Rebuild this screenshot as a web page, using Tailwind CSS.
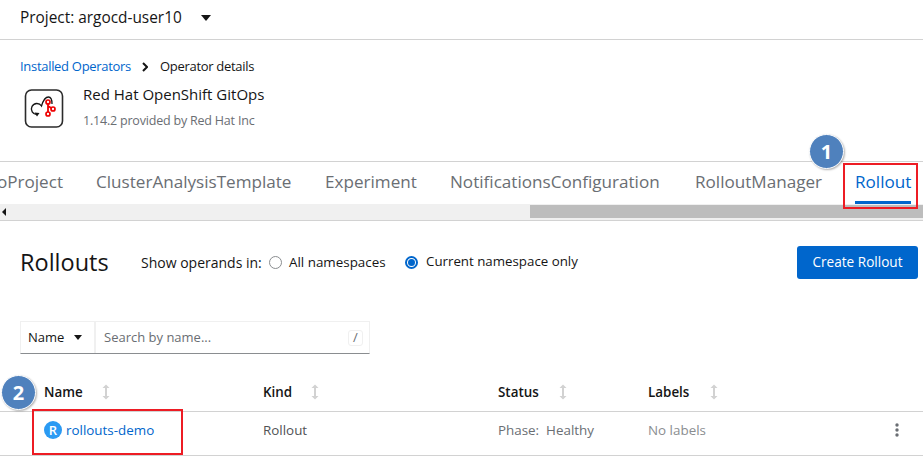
<!DOCTYPE html>
<html>
<head>
<meta charset="utf-8">
<script src="https://cdn.jsdelivr.net/npm/@tailwindcss/browser@4"></script>
</head>
<body class="bg-white">
<div class="relative w-[923px] h-[468px] overflow-hidden bg-white text-[#151515] font-['Open_Sans','Noto_Sans',sans-serif]">

  <!-- project bar -->
  <div class="h-10 border-b border-[#d2d2d2] pl-5 pb-[4px] flex items-center">
    <span class="text-[15.4px] w-[181px]">Project: argocd-user10</span>
    <span class="w-0 h-0 border-x-[5.5px] border-x-transparent border-t-[6px] border-t-[#151515]"></span>
  </div>

  <!-- breadcrumb -->
  <div class="h-[37px] pl-5 pt-[16px] flex items-center text-[13px] tracking-[-0.3px] leading-none">
    <a class="text-[#0066cc] w-[122px]">Installed Operators</a>
    <svg class="w-[6px] h-[10px] mr-[12px]" viewBox="0 0 6 10"><path d="M1 1l4 4-4 4" fill="none" stroke="#151515" stroke-width="2"/></svg>
    <span>Operator details</span>
  </div>

  <!-- operator heading -->
  <div class="h-[84px] pl-6 pt-[11px] flex gap-[19px]">
    <svg class="w-10 h-10 shrink-0" viewBox="0 0 40 40">
      <rect x="1.500" y="2" width="37" height="37" rx="6" fill="#fff" stroke="#2b2b2b" stroke-width="1.600"/>
      <path d="M13 26.500a5.500 5.500 0 1 1 4.500-8.500C19 13 21 9 24.500 9 27 9 28 11 28 16" fill="none" stroke="#151515" stroke-width="1.300"/>
      <path d="M10.500 24.500l2.500 4 2.500-3.500z" fill="#151515"/>
      <path d="M24 15v10M24 18l5 3" fill="none" stroke="#e00" stroke-width="1.800"/>
      <circle cx="24" cy="14" r="2" fill="#fff" stroke="#e00" stroke-width="1.700"/>
      <circle cx="29" cy="21" r="2" fill="#fff" stroke="#e00" stroke-width="1.700"/>
      <circle cx="24" cy="26" r="2" fill="#fff" stroke="#e00" stroke-width="1.700"/>
    </svg>
    <div>
      <div class="text-[15px] font-medium leading-5 mt-[-4px]">Red Hat OpenShift GitOps</div>
      <div class="text-[12.5px] tracking-[-0.2px] leading-5 mt-[7px] text-[#6a6e73]">1.14.2 provided by Red Hat Inc</div>
    </div>
  </div>

  <!-- tabs -->
  <div class="border-t border-[#d2d2d2] h-[43px] flex items-start overflow-hidden text-[17.1px] leading-[40px] text-[#6a6e73] whitespace-nowrap">
    <span class="w-[96px] shrink-0 flex justify-end pr-[33px]">oProject</span>
    <span class="w-[229px] shrink-0">ClusterAnalysisTemplate</span>
    <span class="w-[125px] shrink-0">Experiment</span>
    <span class="w-[245px] shrink-0">NotificationsConfiguration</span>
    <span class="w-[160px] shrink-0">RolloutManager</span>
    <span class="w-[56px] shrink-0 h-[42px] text-[#0066cc] border-b-[3px] border-[#0066cc]">Rollout</span>
  </div>

  <!-- horizontal scrollbar -->
  <div class="h-[17px] bg-[#f0f0f0] border-b border-[#d2d2d2] flex items-center">
    <span class="ml-[2px] w-0 h-0 border-y-[4px] border-y-transparent border-r-[4px] border-r-[#151515]"></span>
    <div class="ml-auto w-[393px] h-[13px] mb-[1px] bg-[#bdbdbd]"></div>
  </div>

  <!-- page title row -->
  <div class="h-[82px] pl-5 pr-[5px] flex items-center">
    <h1 class="text-[23.5px] w-[121px] pt-[2px]">Rollouts</h1>
    <span class="text-[14px] w-[128px]">Show operands in:</span>
    <span class="w-[13px] h-[13px] rounded-full border border-[#8a8d90]"></span>
    <span class="text-[13.4px] ml-[7px] w-[116px]">All namespaces</span>
    <span class="w-[13px] h-[13px] rounded-full border-[2px] border-[#0066cc] flex items-center justify-center"><span class="w-[7px] h-[7px] rounded-full bg-[#0066cc]"></span></span>
    <span class="text-[13.3px] ml-[8px]">Current namespace only</span>
    <button class="ml-auto h-[33px] w-[121px] bg-[#0066cc] text-white text-[13.6px] rounded-[3px]">Create Rollout</button>
  </div>

  <!-- filter -->
  <div class="ml-5 mt-[18px] w-[350px] h-[33px] flex border border-[#f0f0f0] border-b-[#8a8d90] text-[13px]">
    <div class="w-[75px] border-r-[2px] border-[#f0f0f0] pl-[7px] flex items-center gap-[10px]">
      <span>Name</span>
      <span class="w-0 h-0 border-x-[4px] border-x-transparent border-t-[5px] border-t-[#151515]"></span>
    </div>
    <div class="flex-1 pl-[8px] pr-[6px] flex items-center justify-between text-[#6a6e73]">
      <span>Search by name...</span>
      <span class="w-[15px] h-[16px] border border-[#f0f0f0] rounded-[3px] flex items-center justify-center text-[13px] leading-none">/</span>
    </div>
  </div>

  <!-- table -->
  <table class="mt-[16px] w-full text-[13.4px] border-collapse">
    <thead>
      <tr class="h-[41px] border-b border-[#d2d2d2] text-left">
        <th class="w-[263px] pl-[44px] pt-[3px] font-semibold"><span class="inline-block w-[58px]">Name</span><svg class="inline w-[8px] h-[16px] align-[-3px]" viewBox="0 0 8 16"><path d="M4 2v12" stroke="#d2d2d2" stroke-width="2"/><path d="M0.500 4L4 0.500 7.500 4zM0.500 12L4 15.500 7.500 12z" fill="#d2d2d2"/></svg></th>
        <th class="w-[235px] pt-[3px] font-semibold"><span class="inline-block w-[48px]">Kind</span><svg class="inline w-[8px] h-[16px] align-[-3px]" viewBox="0 0 8 16"><path d="M4 2v12" stroke="#d2d2d2" stroke-width="2"/><path d="M0.500 4L4 0.500 7.500 4zM0.500 12L4 15.500 7.500 12z" fill="#d2d2d2"/></svg></th>
        <th class="w-[150px] pt-[3px] font-semibold"><span class="inline-block w-[61px]">Status</span><svg class="inline w-[8px] h-[16px] align-[-3px]" viewBox="0 0 8 16"><path d="M4 2v12" stroke="#d2d2d2" stroke-width="2"/><path d="M0.500 4L4 0.500 7.500 4zM0.500 12L4 15.500 7.500 12z" fill="#d2d2d2"/></svg></th>
        <th class="pt-[3px] font-semibold"><span class="inline-block w-[62px]">Labels</span><svg class="inline w-[8px] h-[16px] align-[-3px]" viewBox="0 0 8 16"><path d="M4 2v12" stroke="#d2d2d2" stroke-width="2"/><path d="M0.500 4L4 0.500 7.500 4zM0.500 12L4 15.500 7.500 12z" fill="#d2d2d2"/></svg></th>
        <th class="w-[40px]"></th>
      </tr>
    </thead>
    <tbody>
      <tr class="h-[44px] border-b border-[#d2d2d2]">
        <td class="pl-[44px] pb-[6px]">
          <span class="inline-flex items-center gap-[4px] text-[#0066cc]">
            <span class="w-[18px] h-[18px] rounded-full bg-[#2b9af3] text-white text-[13px] font-semibold flex items-center justify-center">R</span>
            rollouts-demo
          </span>
        </td>
        <td class="pb-[6px] text-[#4f5255]">Rollout</td>
        <td class="pb-[6px] text-[#6a6e73]">Phase:&nbsp; Healthy</td>
        <td class="pb-[6px] text-[#8a8d90]">No labels</td>
        <td class="pb-[6px]">
          <svg class="w-[4px] h-[14px] ml-[12px]" viewBox="0 0 4 14"><circle cx="2" cy="2" r="1.700" fill="#6a6e73"/><circle cx="2" cy="7" r="1.700" fill="#6a6e73"/><circle cx="2" cy="12" r="1.700" fill="#6a6e73"/></svg>
        </td>
      </tr>
    </tbody>
  </table>

  <!-- annotations over the screenshot -->
  <div class="absolute left-[843px] top-[163px] w-[75px] h-[46px] border-[2px] border-[#ed1c24]"></div>
  <div class="absolute left-[32px] top-[409px] w-[151px] h-[46px] border-[2px] border-[#ed1c24]"></div>
  <div class="absolute left-[809px] top-[134px] w-[35px] h-[35px] rounded-full bg-[#4f81bd] border border-white shadow-[1px_1px_2px_rgba(0,0,0,0.3)] flex items-center justify-center text-white font-bold text-[20px]">1</div>
  <div class="absolute left-[1px] top-[375px] w-[35px] h-[35px] rounded-full bg-[#4f81bd] border border-white shadow-[1px_1px_2px_rgba(0,0,0,0.3)] flex items-center justify-center text-white font-bold text-[20px]">2</div>
</div>
</body>
</html>
